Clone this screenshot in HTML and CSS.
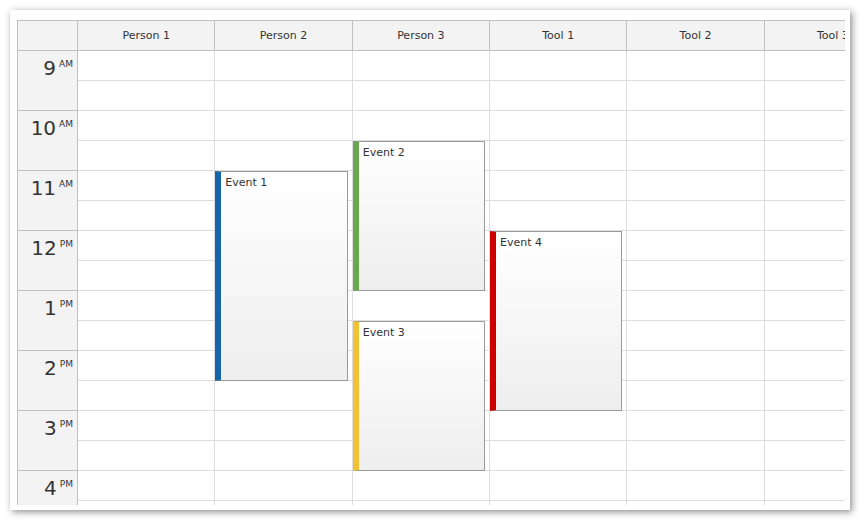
FILE: index.html
```html
<!DOCTYPE html>
<html>
<head>
<meta charset="utf-8">
<link rel="stylesheet" href="styles.css">
</head>
<body>
<div class="panel">
  <div class="cal">
    <div class="head">
      <div class="corner"></div>
      <div class="colh">Person 1</div>
      <div class="colh">Person 2</div>
      <div class="colh">Person 3</div>
      <div class="colh">Tool 1</div>
      <div class="colh">Tool 2</div>
      <div class="colh">Tool 3</div>
    </div>
    <div class="body">
      <div class="rowh">
        <div class="hour"><span class="num">9</span><span class="ampm">AM</span></div>
        <div class="hour"><span class="num">10</span><span class="ampm">AM</span></div>
        <div class="hour"><span class="num">11</span><span class="ampm">AM</span></div>
        <div class="hour"><span class="num">12</span><span class="ampm">PM</span></div>
        <div class="hour"><span class="num">1</span><span class="ampm">PM</span></div>
        <div class="hour"><span class="num">2</span><span class="ampm">PM</span></div>
        <div class="hour"><span class="num">3</span><span class="ampm">PM</span></div>
        <div class="hour"><span class="num">4</span><span class="ampm">PM</span></div>
      </div>
      <div class="col">
        <div class="cell"></div><div class="cell"></div><div class="cell"></div><div class="cell"></div>
        <div class="cell"></div><div class="cell"></div><div class="cell"></div><div class="cell"></div>
        <div class="cell"></div><div class="cell"></div><div class="cell"></div><div class="cell"></div>
        <div class="cell"></div><div class="cell"></div><div class="cell"></div><div class="cell"></div>
      </div>
      <div class="col">
        <div class="cell"></div><div class="cell"></div><div class="cell"></div><div class="cell"></div>
        <div class="cell"></div><div class="cell"></div><div class="cell"></div><div class="cell"></div>
        <div class="cell"></div><div class="cell"></div><div class="cell"></div><div class="cell"></div>
        <div class="cell"></div><div class="cell"></div><div class="cell"></div><div class="cell"></div>
        <div class="event blue" style="top:120px;height:210px">Event 1</div>
      </div>
      <div class="col">
        <div class="cell"></div><div class="cell"></div><div class="cell"></div><div class="cell"></div>
        <div class="cell"></div><div class="cell"></div><div class="cell"></div><div class="cell"></div>
        <div class="cell"></div><div class="cell"></div><div class="cell"></div><div class="cell"></div>
        <div class="cell"></div><div class="cell"></div><div class="cell"></div><div class="cell"></div>
        <div class="event green" style="top:90px;height:150px">Event 2</div>
        <div class="event yellow" style="top:270px;height:150px">Event 3</div>
      </div>
      <div class="col">
        <div class="cell"></div><div class="cell"></div><div class="cell"></div><div class="cell"></div>
        <div class="cell"></div><div class="cell"></div><div class="cell"></div><div class="cell"></div>
        <div class="cell"></div><div class="cell"></div><div class="cell"></div><div class="cell"></div>
        <div class="cell"></div><div class="cell"></div><div class="cell"></div><div class="cell"></div>
        <div class="event red" style="top:180px;height:180px">Event 4</div>
      </div>
      <div class="col">
        <div class="cell"></div><div class="cell"></div><div class="cell"></div><div class="cell"></div>
        <div class="cell"></div><div class="cell"></div><div class="cell"></div><div class="cell"></div>
        <div class="cell"></div><div class="cell"></div><div class="cell"></div><div class="cell"></div>
        <div class="cell"></div><div class="cell"></div><div class="cell"></div><div class="cell"></div>
      </div>
      <div class="col">
        <div class="cell"></div><div class="cell"></div><div class="cell"></div><div class="cell"></div>
        <div class="cell"></div><div class="cell"></div><div class="cell"></div><div class="cell"></div>
        <div class="cell"></div><div class="cell"></div><div class="cell"></div><div class="cell"></div>
        <div class="cell"></div><div class="cell"></div><div class="cell"></div><div class="cell"></div>
      </div>
    </div>
  </div>
</div>
</body>
</html>
```

FILE: styles.css
```css
* { box-sizing: border-box; }
html, body { margin: 0; padding: 0; background: #fff; }
body {
  font-family: "DejaVu Sans", Verdana, sans-serif;
  color: #333;
}
.panel {
  margin: 10px;
  width: 840px;
  height: 500px;
  background: #fff;
  box-shadow: 2px 2px 7px rgba(0, 0, 0, 0.45);
  padding: 10px 0 0 7px;
  overflow: hidden;
}
.cal {
  width: 828px;
  height: 485px;
  border-top: 1px solid #c0c0c0;
  border-left: 1px solid #c0c0c0;
  overflow: hidden;
  display: flex;
  flex-direction: column;
}
.head {
  display: flex;
  flex: none;
  height: 30px;
}
.corner {
  flex: none;
  width: 60px;
  height: 30px;
  background: #f3f3f3;
  border-right: 1px solid #c0c0c0;
  border-bottom: 1px solid #c0c0c0;
}
.colh {
  flex: none;
  width: 137.35px;
  height: 30px;
  background: #f3f3f3;
  border-right: 1px solid #c0c0c0;
  border-bottom: 1px solid #c0c0c0;
  font-size: 11px;
  display: flex;
  align-items: center;
  justify-content: center;
  white-space: nowrap;
}
.body {
  display: flex;
  flex: none;
}
.rowh {
  flex: none;
  width: 60px;
  display: flex;
  flex-direction: column;
}
.hour {
  height: 60px;
  background: #f3f3f3;
  border-right: 1px solid #c0c0c0;
  border-bottom: 1px solid #c0c0c0;
  display: flex;
  justify-content: flex-end;
  align-items: flex-start;
  padding: 5px 4px 0 0;
}
.num {
  font-size: 20px;
  line-height: 24px;
}
.ampm {
  font-size: 9px;
  line-height: 12px;
  margin-left: 3px;
  margin-top: 2px;
}
.col {
  flex: none;
  width: 137.35px;
  position: relative;
  display: flex;
  flex-direction: column;
}
.cell {
  height: 30px;
  flex: none;
  border-right: 1px solid #ddd;
  border-bottom: 1px solid #ddd;
}
.event {
  position: absolute;
  left: 0;
  right: 5px;
  border: 1px solid #999;
  border-left-width: 6px;
  background: linear-gradient(to bottom, #ffffff, #eeeeee);
  font-size: 11px;
  line-height: 16px;
  padding: 3px 4px;
  color: #333;
}
.blue { border-left-color: #1565a8; }
.green { border-left-color: #6aa84f; }
.yellow { border-left-color: #f1c232; }
.red { border-left-color: #cc0000; }
```
